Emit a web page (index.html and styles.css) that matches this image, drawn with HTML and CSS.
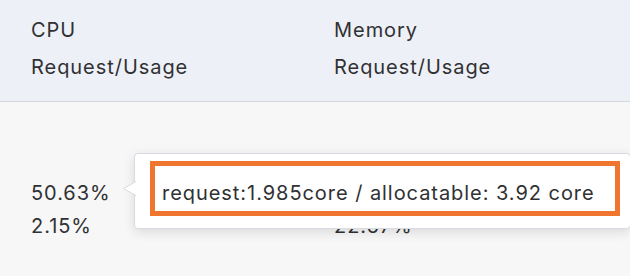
FILE: index.html
```html
<!DOCTYPE html>
<html lang="en">
<head>
<meta charset="utf-8">
<title>Resources</title>
<link rel="stylesheet" href="styles.css">
</head>
<body>
<div class="table">
  <div class="thead">
    <div class="th">CPU<br>Request/Usage</div>
    <div class="th">Memory<br>Request/Usage</div>
  </div>
  <div class="tbody">
    <div class="td">50.63%<br>2.15%</div>
    <div class="td">&nbsp;<br>22.67%</div>
    <div class="tooltip">
      <svg class="arrow" width="13" height="15" viewBox="0 0 13 15">
        <polygon points="13,0.5 0.5,7.5 13,14.5" fill="#fff"/>
        <polyline points="13,0.5 0.5,7.5 13,14.5" fill="none" stroke="#d8dbe2" stroke-width="1"/>
      </svg>
      <div class="highlight">request:1.985core / allocatable: 3.92 core</div>
    </div>
  </div>
</div>
</body>
</html>
```
FILE: styles.css
```css
html, body {
  margin: 0;
  padding: 0;
}
body {
  width: 630px;
  height: 276px;
  overflow: hidden;
  background: #f7f7f7;
  font-family: "Inter", "Liberation Sans", sans-serif;
  font-size: 20px;
  letter-spacing: 0.95px;
  color: #303133;
}
.table {
  display: flex;
  flex-direction: column;
}
.thead {
  display: grid;
  grid-template-columns: 303px 1fr;
  padding: 12px 0 15px 31px;
  background: #eef0f7;
  border-bottom: 1px solid #d3d6dd;
  line-height: 37px;
}
.tbody {
  position: relative;
  display: grid;
  grid-template-columns: 303px 1fr;
  padding: 75px 0 0 31px;
  line-height: 33px;
  height: 99px;
}
.tooltip {
  position: absolute;
  left: 134px;
  top: 51px;
  width: 470px;
  height: 55px;
  padding: 7px 10px 12px 15px;
  background: #fff;
  border: 1px solid #d8dbe2;
  border-radius: 4px;
  box-shadow: 0 3px 12px rgba(0, 0, 0, 0.12);
}
.arrow {
  position: absolute;
  left: -12px;
  top: 27px;
  display: block;
}
.highlight {
  height: 23px;
  padding: 16px 0 6px 7px;
  border: 5px solid #f07630;
  line-height: 23px;
  white-space: nowrap;
}
```
